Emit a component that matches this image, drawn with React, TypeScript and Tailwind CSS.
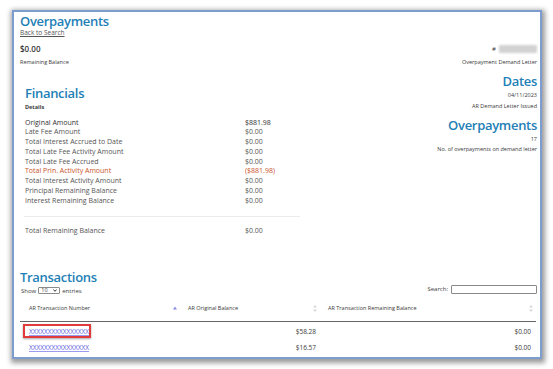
import React from 'react';

const FONT = "font-['Open_Sans','Noto_Sans',sans-serif]";

const details: { label: string; value: string; red?: boolean; strong?: boolean }[] = [
  { label: 'Original Amount', value: '$881.98', strong: true },
  { label: 'Late Fee Amount', value: '$0.00' },
  { label: 'Total Interest Accrued to Date', value: '$0.00' },
  { label: 'Total Late Fee Activity Amount', value: '$0.00' },
  { label: 'Total Late Fee Accrued', value: '$0.00' },
  { label: 'Total Prin. Activity Amount', value: '($881.98)', red: true },
  { label: 'Total Interest Activity Amount', value: '$0.00' },
  { label: 'Principal Remaining Balance', value: '$0.00' },
  { label: 'Interest Remaining Balance', value: '$0.00' },
];

const rows = [
  { num: 'XXXXXXXXXXXXXXXX', original: '$58.28', remaining: '$0.00', marked: true },
  { num: 'XXXXXXXXXXXXXXXX', original: '$16.57', remaining: '$0.00' },
];

function SortBoth() {
  return (
    <svg width="4" height="7" viewBox="0 0 4 7" className="shrink-0">
      <path d="M2 0 L4 2.6 H0 Z" fill="#d8d8d8" />
      <path d="M2 7 L4 4.4 H0 Z" fill="#d8d8d8" />
    </svg>
  );
}

function SortUp() {
  return (
    <svg width="4" height="4" viewBox="0 0 4 4" className="shrink-0">
      <path d="M2 0.5 L4 3.5 H0 Z" fill="#8c8ce6" />
    </svg>
  );
}

function Heading({ children, className = '' }: { children: React.ReactNode; className?: string }) {
  return (
    <h2 className={`text-[13px] leading-[13px] font-semibold text-[#1e80b6] tracking-[-0.3px] ${className}`}>
      {children}
    </h2>
  );
}

export default function App() {
  return (
    <div className={`w-[553px] h-[369px] bg-white pt-[10px] pl-[12px] ${FONT} text-[#3a3a3a]`}>
      <div className="w-[530px] h-[349px] bg-white border-2 border-[#7d9dd0] shadow-[1px_2px_5px_2px_rgba(0,0,0,0.4)] pl-[6px] pr-[3px] pt-[2.5px] flex flex-col">
        {/* header */}
        <Heading>Overpayments</Heading>
        <a className="text-[6.5px] leading-[7px] underline text-[#555] w-fit mt-[1px]">Back to Search</a>

        <div className="flex justify-between mt-[9.5px]">
          <div>
            <div className="text-[8px] leading-[8px] font-semibold text-[#333]">$0.00</div>
            <div className="text-[5.5px] leading-[7px] mt-[5.5px]">Remaining Balance</div>
          </div>
          <div className="flex flex-col items-end">
            <div className="flex items-center gap-[3px] h-[8px]">
              <span className="text-[6px] leading-[8px]">#</span>
              <span className="w-[38px] h-[8px] bg-[#d2d2d2] rounded-[1px] blur-[0.8px]" />
            </div>
            <div className="text-[5.5px] leading-[7px] mt-[5.5px]">Overpayment Demand Letter</div>
          </div>
        </div>

        {/* financials + dates */}
        <div className="flex">
          <div className="w-[280px] pl-[5px] pt-[21px]">
            <Heading>Financials</Heading>
            <div className="text-[5.5px] leading-[7px] font-bold mt-[4px]">Details</div>
            <div className="mt-[7px]">
              {details.map((d) => (
                <div
                  key={d.label}
                  className={`flex text-[7px] leading-[9.8px] ${d.red ? 'text-[#c9532c]' : d.strong ? 'text-[#333]' : 'text-[#555]'}`}
                >
                  <span className="w-[220px]">{d.label}</span>
                  <span>{d.value}</span>
                </div>
              ))}
            </div>
            <div className="h-px bg-[#ececec] mt-[10.6px] -ml-[1px] w-[276px]" />
            <div className="flex text-[7px] leading-[9.8px] text-[#555] mt-[8.7px]">
              <span className="w-[220px]">Total Remaining Balance</span>
              <span>$0.00</span>
            </div>
          </div>

          <div className="flex-1 flex flex-col items-end pt-[9px]">
            <Heading>Dates</Heading>
            <div className="text-[5.5px] leading-[7px] mt-[4px]">04/11/2023</div>
            <div className="text-[5.5px] leading-[7px] mt-[4.7px]">AR Demand Letter Issued</div>
            <Heading className="mt-[9.3px]">Overpayments</Heading>
            <div className="text-[5.5px] leading-[7px] mt-[3.3px]">17</div>
            <div className="text-[5.5px] leading-[7px] mt-[3.7px]">No. of overpayments on demand letter</div>
          </div>
        </div>

        {/* transactions */}
        <Heading className="mt-[35.3px]">Transactions</Heading>
        <div className="flex justify-between items-center h-[10px]">
          <div className="flex items-center gap-[2px] text-[6px] leading-[8px] pl-[1px] mt-[3px]">
            <span>Show</span>
            <span className="flex items-center justify-between w-[22px] h-[7px] border border-[#8a8a8a] rounded-[1px] px-[2px] text-[5.5px] leading-[5px]">
              10
              <svg width="4" height="3" viewBox="0 0 4 3">
                <path d="M0.4 0.5 L2 2.3 L3.6 0.5" stroke="#222" strokeWidth="0.9" fill="none" />
              </svg>
            </span>
            <span>entries</span>
          </div>
          <div className="flex items-center gap-[3px] text-[6px] leading-[8px]">
            <span>Search:</span>
            <span className="w-[86px] h-[9px] border border-[#8a8a8a] rounded-[1px] bg-white" />
          </div>
        </div>

        <div className="w-[516px]">
          <div className="flex border-b-[1.5px] border-[#666] h-[28px] items-center text-[5.5px] pt-[1px]">
            <div className="w-[160px] flex items-center justify-between pl-[9px] pr-[3px]">
              <span>AR Transaction Number</span>
              <SortUp />
            </div>
            <div className="w-[140px] flex items-center justify-between pl-[8px] pr-[3px]">
              <span>AR Original Balance</span>
              <SortBoth />
            </div>
            <div className="flex-1 flex items-center justify-between pl-[8px] pr-[3px]">
              <span>AR Transaction Remaining Balance</span>
              <SortBoth />
            </div>
          </div>
          <div className="pt-[2px]">
            {rows.map((r, i) => (
              <div key={i} className="flex h-[15.7px] items-center text-[6.5px]">
                <div className="w-[160px] pl-[9px]">
                  <a className="relative underline text-[#5a5ae0] decoration-[#9a9aee]">
                    {r.num}
                    {r.marked && (
                      <span className="absolute -left-[6px] -right-[2px] -top-[3px] -bottom-[2px] border-2 border-[#e23b3b] shadow-[0_1px_2px_rgba(0,0,0,0.35)]" />
                    )}
                  </a>
                </div>
                <div className="w-[140px] text-right pr-[4px]">{r.original}</div>
                <div className="flex-1 text-right pr-[5px]">{r.remaining}</div>
              </div>
            ))}
          </div>
        </div>
      </div>
    </div>
  );
}
